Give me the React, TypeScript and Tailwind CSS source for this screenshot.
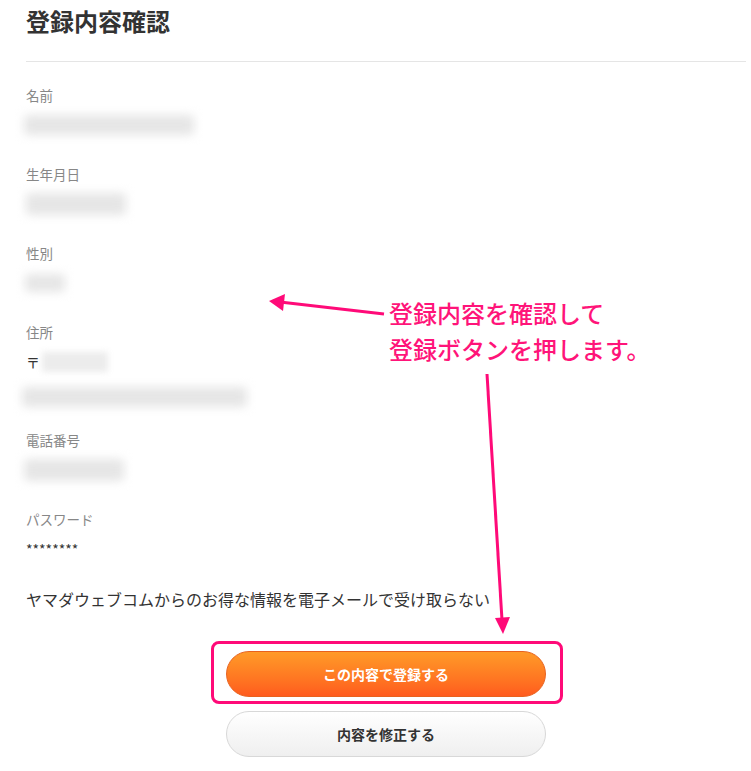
import React from "react";

const font = { fontFamily: '"Noto Sans CJK JP", "Noto Sans", sans-serif' };

function Blur({ w, h = 20, shift = 0 }: { w: number; h?: number; shift?: number }) {
  return (
    <div className="relative h-[26px] flex items-center" style={{ marginLeft: shift }}>
      <div
        className="bg-[#e6e6e6] blur-[5px] rounded-sm"
        style={{ width: w, height: h }}
      />
    </div>
  );
}

function Label({ children }: { children: React.ReactNode }) {
  return <div className="h-5 leading-5 text-[13.5px] text-[#878787]">{children}</div>;
}

export default function App() {
  return (
    <div className="relative w-[751px] h-[771px] bg-white overflow-hidden text-[#333]" style={font}>
      <div className="pl-[26px] pr-[5px]">
        <h1 className="pt-[4px] h-[37px] leading-[33px] text-[24px] font-bold text-[#333]">登録内容確認</h1>
        <div className="mt-[24px] h-px bg-[#e5e5e5]" />

        {/* fields */}
        <div className="mt-[23px]">
          <Label>名前</Label>
          <div className="mt-[7px]">
            <Blur w={170} shift={-2} />
          </div>
        </div>

        <div className="mt-[26px]">
          <Label>生年月日</Label>
          <div className="mt-[7px]">
            <Blur w={100} h={22} shift={0} />
          </div>
        </div>

        <div className="mt-[26px]">
          <Label>性別</Label>
          <div className="mt-[7px]">
            <Blur w={40} h={18} shift={-1} />
          </div>
        </div>

        <div className="mt-[26px]">
          <Label>住所</Label>
          <div className="mt-[7px] h-[26px] flex items-center gap-[2px] text-[14px]">
            <span className="text-[#333]">〒</span>
            <div className="bg-[#ececec] blur-[3px] w-[66px] h-[20px]" />
          </div>
          <div className="mt-[9px]">
            <Blur w={225} h={20} shift={-4} />
          </div>
        </div>

        <div className="mt-[20px]">
          <Label>電話番号</Label>
          <div className="mt-[7px]">
            <Blur w={100} h={22} shift={-2} />
          </div>
        </div>

        <div className="mt-[26px]">
          <Label>パスワード</Label>
          <div className="mt-[7px] h-[26px] leading-[26px] text-[14px] text-[#333]">********</div>
        </div>

        <p className="mt-[25px] h-6 leading-6 text-[16px] text-[#333]">
          ヤマダウェブコムからのお得な情報を電子メールで受け取らない
        </p>

        <div className="mt-[40px] flex flex-col items-center gap-[14px]">
          <button className="w-[320px] h-[46px] rounded-full border border-[#e8621e] bg-gradient-to-b from-[#ff9a28] to-[#ff5b1e] text-white text-[14px] font-bold">
            この内容で登録する
          </button>
          <button className="w-[320px] h-[46px] rounded-full border border-[#d8d8d8] bg-gradient-to-b from-white to-[#efefef] text-[#333] text-[14px] font-bold">
            内容を修正する
          </button>
        </div>
      </div>

      {/* annotation overlay */}
      <div className="absolute left-[211px] top-[641px] w-[352px] h-[63px] border-[3px] border-[#ff0a78] rounded-[8px]" />
      <div className="absolute left-[389px] top-[295px] text-[24px] leading-[36px] text-[#ff1479] font-medium">
        <div>登録内容を確認して</div>
        <div>登録ボタンを押します。</div>
      </div>
      <svg className="absolute left-0 top-0" width="751" height="771" viewBox="0 0 751 771">
        <line x1="384" y1="314" x2="280" y2="302" stroke="#ff0a78" strokeWidth="3" />
        <polygon points="269,301 285,294 283,311" fill="#ff0a78" />
        <line x1="487" y1="374" x2="502" y2="620" stroke="#ff0a78" strokeWidth="3" />
        <polygon points="495,618 510,617 503,634" fill="#ff0a78" />
      </svg>
    </div>
  );
}
